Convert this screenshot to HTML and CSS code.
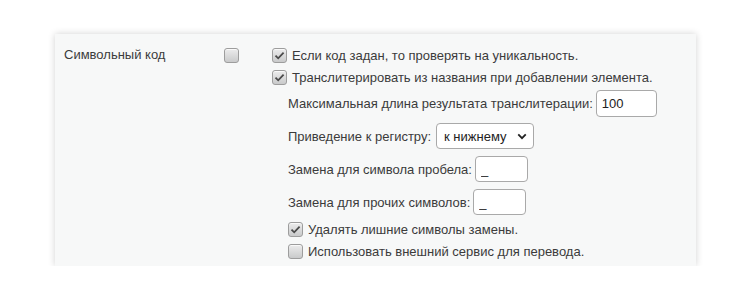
FILE: index.html
```html
<!DOCTYPE html>
<html lang="ru">
  <head>
    <meta charset="utf-8">
    <link rel="stylesheet" href="styles.css">
  </head>
  <body>
    <div class="panel">
      <div class="label">Символьный код</div>
      <div class="main-check">
        <span class="cb"></span>
      </div>
      <div class="options">
        <label class="check-row">
          <span class="cb checked"><svg viewBox="0 0 15 15"><path d="M3.5 7.6 L6.2 10.3 L11.6 4.6" /></svg></span>
          Если код задан, то проверять на уникальность.
        </label>
        <label class="check-row">
          <span class="cb checked"><svg viewBox="0 0 15 15"><path d="M3.5 7.6 L6.2 10.3 L11.6 4.6" /></svg></span>
          Транслитерировать из названия при добавлении элемента.
        </label>

        <div class="sub">
          <div class="field-row first">
            Максимальная длина результата транслитерации:
            <input class="text-input len" type="text" value="100">
          </div>
          <div class="field-row wide">
            Приведение к регистру:
            <div class="select-wrap">
              <select class="select">
                <option>к нижнему</option>
                <option>к верхнему</option>
                <option>не менять</option>
              </select>
              <svg class="chevron" viewBox="0 0 12 8"><path d="M1.5 1.5 L6 6 L10.5 1.5" /></svg>
            </div>
          </div>
          <div class="field-row">
            Замена для символа пробела:
            <input class="text-input short" type="text" value="_">
          </div>
          <div class="field-row">
            Замена для прочих символов:
            <input class="text-input short" type="text" value="_">
          </div>
          <label class="check-row gap">
            <span class="cb checked"><svg viewBox="0 0 15 15"><path d="M3.5 7.6 L6.2 10.3 L11.6 4.6" /></svg></span>
            Удалять лишние символы замены.
          </label>
          <label class="check-row">
            <span class="cb"></span>
            Использовать внешний сервис для перевода.
          </label>
        </div>
      </div>
    </div>
  </body>
</html>
```

FILE: styles.css
```css
/* Общие стили */
body {
  margin: 0;
  background: #ffffff;
  font-family: "Liberation Sans", Arial, sans-serif;
  font-size: 13px;
  color: #3b3b3b;
  padding: 34px 0 0 55px;
}

.panel {
  display: flex;
  width: 641px;
  height: 232px;
  box-sizing: border-box;
  padding: 10px 0 0 9px;
  background: #f7f8f8;
  box-shadow: 0 0 7px rgba(0, 0, 0, 0.18);
}

.label {
  width: 160px;
  line-height: 22px;
}

.main-check {
  width: 48px;
  height: 22px;
  display: flex;
  align-items: center;
}

.options {
  display: flex;
  flex-direction: column;
}

.check-row {
  display: flex;
  align-items: center;
  gap: 5px;
  height: 22px;
  white-space: nowrap;
}

.check-row.gap {
  margin-top: 3px;
}

/* Чекбоксы */
.cb {
  display: inline-block;
  width: 13px;
  height: 13px;
  flex: none;
  border: 1px solid #9d9d9d;
  border-radius: 3px;
  background: linear-gradient(#ececec, #c9cacb);
  box-shadow: inset 0 1px 0 rgba(255, 255, 255, 0.7);
  position: relative;
}

.cb svg {
  position: absolute;
  left: -1px;
  top: -1px;
  width: 15px;
  height: 15px;
}

.cb svg path {
  fill: none;
  stroke: #4a4a4a;
  stroke-width: 1.8;
}

.sub {
  display: flex;
  flex-direction: column;
  padding-left: 16px;
}

.field-row {
  display: flex;
  align-items: center;
  gap: 3px;
  height: 26px;
  margin-top: 7px;
  white-space: nowrap;
}

.field-row.first {
  height: 27px;
  margin-top: 2px;
  margin-bottom: -1px;
}

.field-row.wide {
  gap: 5px;
}

.text-input {
  box-sizing: border-box;
  height: 26px;
  border: 1px solid #a9a9a9;
  border-radius: 4px;
  background: #fff;
  font-family: "Liberation Sans", Arial, sans-serif;
  font-size: 13px;
  color: #222;
  padding: 0 5px;
  margin: 0;
}

.text-input.len {
  width: 61px;
  height: 27px;
}

.text-input.short {
  width: 53px;
}

.select-wrap {
  position: relative;
}

.select {
  appearance: none;
  box-sizing: border-box;
  width: 98px;
  height: 26px;
  border: 1px solid #a9a9a9;
  border-radius: 4px;
  background: #fff;
  font-family: "Liberation Sans", Arial, sans-serif;
  font-size: 13px;
  color: #222;
  padding: 0 0 0 7px;
  margin: 0;
}

.chevron {
  position: absolute;
  right: 7px;
  top: 10px;
  width: 10px;
  height: 7px;
  pointer-events: none;
}

.chevron path {
  fill: none;
  stroke: #222;
  stroke-width: 2.2;
}
```
